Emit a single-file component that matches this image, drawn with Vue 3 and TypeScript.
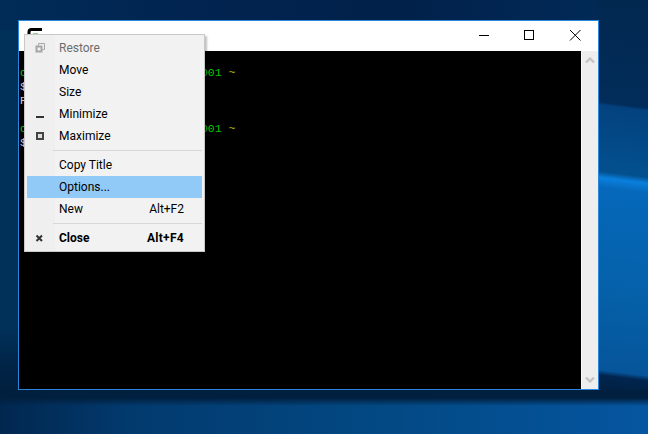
<script setup lang="ts">
interface Item { label?: string; key?: string; icon?: string; sep?: boolean; disabled?: boolean; active?: boolean; bold?: boolean }
const items: Item[] = [
  { label: 'Restore', icon: 'restore', disabled: true },
  { label: 'Move' },
  { label: 'Size' },
  { label: 'Minimize', icon: 'min' },
  { label: 'Maximize', icon: 'max' },
  { sep: true },
  { label: 'Copy Title' },
  { label: 'Options...', active: true },
  { label: 'New', key: 'Alt+F2' },
  { sep: true },
  { label: 'Close', key: 'Alt+F4', icon: 'close', bold: true },
]
</script>

<template>
  <div class="desktop">
    <div class="window">
      <div class="titlebar">
        <svg class="app-icon" width="16" height="16" viewBox="0 0 16 16">
          <path d="M2 14V5q0-2.500 2.500-2.500H15" fill="none" stroke="#000" stroke-width="3" />
          <rect x="6" y="6" width="5" height="2" fill="#8fd08f" />
        </svg>
        <div class="controls">
          <svg width="46" height="31" viewBox="0 0 46 31"><path d="M19 15.500h10" stroke="#000" stroke-width="1" /></svg>
          <svg width="46" height="31" viewBox="0 0 46 31"><rect x="18.500" y="10.500" width="9" height="9" fill="none" stroke="#000" /></svg>
          <svg width="46" height="31" viewBox="0 0 46 31"><path d="M18 10l10.500 10.500M28.500 10L18 20.500" stroke="#000" stroke-width="1" /></svg>
        </div>
      </div>
      <div class="body">
        <div class="terminal">
          <div class="line green">c<span class="tail">001 <span class="yellow">~</span></span></div>
          <div class="line">$</div>
          <div class="line">P</div>
          <div class="line">&nbsp;</div>
          <div class="line green">c<span class="tail">001 <span class="yellow">~</span></span></div>
          <div class="line">$</div>
        </div>
        <div class="scrollbar">
          <svg width="16" height="16" viewBox="0 0 16 16"><path d="M4 10.500l4-4 4 4" fill="none" stroke="#c4c4c4" stroke-width="2.400" /></svg>
          <svg width="16" height="16" viewBox="0 0 16 16"><path d="M4 5.500l4 4 4-4" fill="none" stroke="#c4c4c4" stroke-width="2.400" /></svg>
        </div>
      </div>
    </div>

    <div class="menu">
      <template v-for="(item, i) in items" :key="i">
        <div v-if="item.sep" class="sep"></div>
        <div v-else class="row" :class="{ disabled: item.disabled, active: item.active, bold: item.bold }">
          <span class="gutter">
            <svg v-if="item.icon === 'restore'" width="10" height="10" viewBox="0 0 10 10">
              <path d="M3.500 2.500V.500h6v6h-2" fill="none" stroke="#a6a6a6" />
              <rect x="1.500" y="3.500" width="5" height="5" fill="none" stroke="#a6a6a6" stroke-width="2" />
            </svg>
            <svg v-else-if="item.icon === 'min'" width="10" height="10" viewBox="0 0 10 10"><rect x="1" y="7" width="8" height="2" fill="#333" /></svg>
            <svg v-else-if="item.icon === 'max'" width="10" height="10" viewBox="0 0 10 10"><rect x="2" y="2" width="6" height="6" fill="#ddd" stroke="#444" stroke-width="2" /></svg>
            <svg v-else-if="item.icon === 'close'" width="10" height="10" viewBox="0 0 10 10"><path d="M1.500 2.500l5.500 5.500M7 2.500L1.500 8" stroke="#333" stroke-width="2" /></svg>
          </span>
          <span class="label">{{ item.label }}</span>
          <span v-if="item.key" class="key">{{ item.key }}</span>
        </div>
      </template>
    </div>
  </div>
</template>

<style>
html, body { margin: 0; padding: 0; background: #012a55; }
</style>

<style scoped>
.desktop {
  position: relative;
  width: 648px;
  height: 434px;
  overflow: hidden;
  background-color: #012a55;
  background-repeat: no-repeat;
  background-position: right top, left bottom, left bottom, left top, left top;
  background-size: 52px 390px, 100% 44px, 100% 44px, 100% 30px, 100% 100%;
  background-image:
    linear-gradient(187deg, #01284f 0, #022c5a 107px, #03427f 110px, #03508f 176px, #0a7fdd 182px, #0568ba 192px, #0560a8 300px, #06559a 373px, #01254f 378px, #01203f 396px),
    linear-gradient(180deg, #01203f 0, #01203f 8px, rgba(1, 32, 63, 0) 16px),
    linear-gradient(90deg, #01274f 0, #023a6e 130px, #034a85 400px, #0555a0 648px),
    linear-gradient(90deg, #012c58 0, #012450 180px, #01214a 400px, #012c5a 648px),
    linear-gradient(180deg, #013058 0, #013058 330px, #012345 370px, #01203f 390px);
}
.window {
  position: absolute;
  left: 18px;
  top: 20px;
  width: 579px;
  height: 368px;
  border: 1px solid #2a86d8;
  display: flex;
  flex-direction: column;
  background: #fff;
}
.titlebar {
  height: 30px;
  flex: none;
  display: flex;
  align-items: center;
  justify-content: space-between;
  padding-left: 8px;
}
.app-icon { margin-top: -2px; }
.controls { display: flex; margin-top: -1px; }
.body { flex: 1; display: flex; min-height: 0; }
.terminal {
  flex: 1;
  background: #000;
  color: #ccc;
  padding: 15px 0 0 1px;
  font-family: "Liberation Mono", monospace;
  font-size: 11.5px;
  line-height: 14px;
  overflow: hidden;
}
.line { white-space: pre; }
.tail { margin-left: 174px; }
.green { color: #00c800; }
.yellow { color: #c8c800; }
.scrollbar {
  width: 16px;
  flex: none;
  background: #eeeeee;
  border-left: 1px solid #fafafa;
  display: flex;
  flex-direction: column;
  justify-content: space-between;
  padding: 1px 0;
}
.menu {
  position: absolute;
  left: 24px;
  top: 34px;
  width: 179px;
  padding: 2px 0;
  background: linear-gradient(90deg, #efefef 30px, #f2f2f2 30px);
  border: 1px solid #c8c8c8;
  box-shadow: 2px 2px 2px rgba(0, 0, 0, 0.25);
  font-family: Roboto, sans-serif;
  font-size: 12px;
  color: #000;
}
.row {
  height: 22px;
  margin: 0 2px;
  display: flex;
  align-items: center;
}
.row.active { background: #91c9f7; }
.row.disabled { color: #6d6d6d; }
.row.bold { font-weight: 700; }
.row.bold .key { letter-spacing: 0.3px; }
.gutter {
  width: 32px;
  flex: none;
  display: flex;
  justify-content: center;
  padding-right: 6px;
  box-sizing: border-box;
}
.label { flex: 1; position: relative; top: -0.5px; }
.key { padding-right: 18px; position: relative; top: -0.5px; }
.sep {
  height: 1px;
  margin: 3px 2px 3px 28px;
  background: #d7d7d7;
}
</style>
